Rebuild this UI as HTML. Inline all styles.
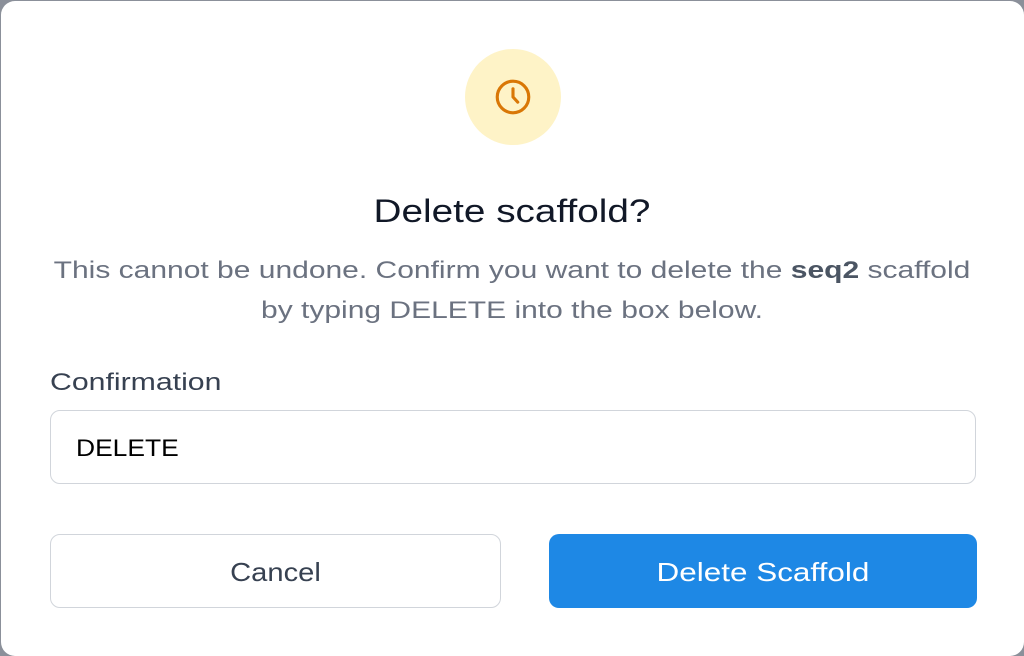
<!DOCTYPE html>
<html><head><style>
html,body{margin:0;padding:0;width:1024px;height:656px;background:#8b909a;overflow:hidden;font-family:"Liberation Sans",Arial,sans-serif}
.d{position:absolute;left:1px;top:1px;width:1023px;height:655px;background:#fff;border-radius:14px}
.ic{position:absolute;left:465px;top:49px;width:96px;height:96px;border-radius:50%;background:#fef3c7}
.ic svg{position:absolute;left:26px;top:26px}
h1{position:absolute;top:191px;left:0;width:1024px;text-align:center;margin:0;font-size:32px;font-weight:normal;color:#111827;line-height:40px;transform:scaleX(1.21)}
p{position:absolute;top:251px;left:0;width:1024px;text-align:center;margin:0;font-size:24px;line-height:40px;color:#6b7280;transform:scaleX(1.25)}
p b{color:#4b5563}
.lab{position:absolute;left:50px;top:367px;font-size:24px;color:#374151;line-height:32px;transform:scaleX(1.26);transform-origin:0 0}
.in{position:absolute;left:50px;top:410px;width:924px;height:72px;border:1.5px solid #d1d5db;border-radius:10px;box-sizing:content-box}
.in span{position:absolute;left:25px;top:22px;font-size:24px;line-height:32px;color:#000;transform:scaleX(1.1);transform-origin:0 0}
.b{position:absolute;top:534px;height:74px;border-radius:10px;font-size:26px;line-height:77px;text-align:center;box-sizing:border-box}
.b span{display:inline-block}
.c{left:50px;width:451px;border:1.5px solid #d1d5db;color:#374151;line-height:74px}
.c span{transform:scaleX(1.12)}
.x{left:549px;width:428px;background:#1e88e5;color:#fff}
.x span{transform:scaleX(1.21)}
</style></head><body>
<div class="d"></div>
<div class="ic"><svg width="44" height="44" viewBox="0 0 24 24" fill="none" stroke="#d97706" stroke-width="1.7" stroke-linecap="round" stroke-linejoin="round"><circle cx="12" cy="12" r="8.6"/><path d="M12 7.5V12l2.6 2.8"/></svg></div>
<h1>Delete scaffold?</h1>
<p>This cannot be undone. Confirm you want to delete the <b>seq2</b> scaffold<br>by typing DELETE into the box below.</p>
<div class="lab">Confirmation</div>
<div class="in"><span>DELETE</span></div>
<div class="b c"><span>Cancel</span></div>
<div class="b x"><span>Delete Scaffold</span></div>
</body></html>
